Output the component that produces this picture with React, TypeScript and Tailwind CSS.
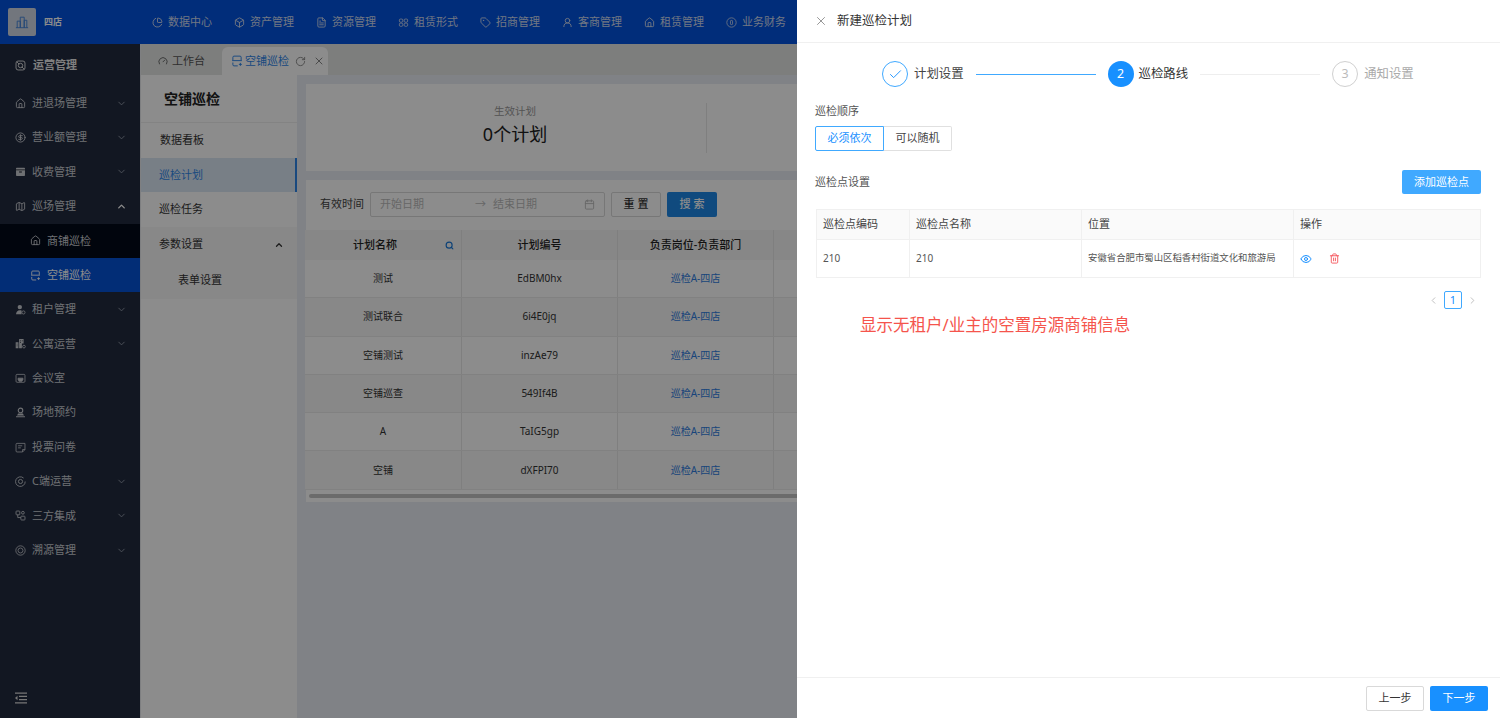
import {
  Box,
  Calendar,
  Check,
  ChevronDown,
  ChevronLeft,
  ChevronRight,
  ChevronUp,
  CircleDollarSign,
  Eye,
  FileText,
  Gauge,
  Home,
  Map,
  PieChart,
  RotateCw,
  Search,
  Tag,
  Trash2,
  UserRound,
  X,
} from "lucide-react";
import type { ComponentType } from "react";

type IconProps = { className?: string };

// icons the packages have no close match for
const BuildingBars = ({ className }: IconProps) => (
  <svg viewBox="0 0 16 16" fill="none" stroke="currentColor" strokeWidth="1" className={className}>
    <path d="M1 14.5h14M2.5 14.5V7h3.5v7.5M6 14.5V2.5h4.5v12M10.5 14.5V6h3v8.5" />
  </svg>
);
const OpsBox = ({ className }: IconProps) => (
  <svg viewBox="0 0 16 16" fill="none" stroke="currentColor" strokeWidth="1.3" className={className}>
    <rect x="1.5" y="1.5" width="13" height="13" rx="3" />
    <circle cx="8" cy="8" r="3.2" />
    <path d="M3 3l3 3M13 13l-3-3" />
  </svg>
);
const SquaresFour = ({ className }: IconProps) => (
  <svg viewBox="0 0 16 16" fill="none" stroke="currentColor" strokeWidth="1.3" className={className}>
    <rect x="2" y="3" width="5" height="4.5" rx="1.5" />
    <rect x="9" y="3" width="5" height="4.5" rx="1.5" />
    <rect x="2" y="9" width="5" height="4.5" rx="1.5" />
    <rect x="9" y="9" width="5" height="4.5" rx="1.5" />
  </svg>
);
const FeeBox = ({ className }: IconProps) => (
  <svg viewBox="0 0 16 16" className={className}>
    <path fill="currentColor" d="M2.5 2.5h11a1 1 0 0 1 1 1v10a1 1 0 0 1-1 1h-11a1 1 0 0 1-1-1v-10a1 1 0 0 1 1-1z" />
    <path fill="#121722" d="M1.5 5h13v1h-13zM6 8h4v1.4H6z" />
  </svg>
);
const EmptyStore = ({ className }: IconProps) => (
  <svg viewBox="0 0 16 16" fill="none" stroke="currentColor" strokeWidth="1.3" className={className}>
    <path d="M2.5 7V3a1.5 1.5 0 0 1 1.5-1.5h8A1.5 1.5 0 0 1 13.5 3v4M1.5 7.5h13" />
    <path d="M2.5 10v3A1.5 1.5 0 0 0 4 14.5h5M10.5 12.5h4M12.5 10.5v4" />
  </svg>
);
const Tenant = ({ className }: IconProps) => (
  <svg viewBox="0 0 16 16" className={className}>
    <circle cx="7" cy="4.5" r="3.2" fill="currentColor" />
    <path fill="currentColor" d="M1.5 15c0-3.6 2.2-6 5.5-6 1 0 1.8.2 2.5.6V15z" />
    <circle cx="12.3" cy="12.3" r="2.3" fill="none" stroke="currentColor" strokeWidth="1.2" />
  </svg>
);
const Apartment = ({ className }: IconProps) => (
  <svg viewBox="0 0 16 16" className={className}>
    <path fill="currentColor" d="M1 6h4v9H1zM6 1.5h6.5V8H10v7H6z" />
    <path fill="#121722" d="M7.5 3.5h1.2v1.2H7.5zM10 3.5h1.2v1.2H10zM7.5 6h1.2v1.2H7.5zM2.5 8.5h1v1h-1zM2.5 11h1v1h-1z" />
    <circle cx="13" cy="12.5" r="2" fill="none" stroke="currentColor" strokeWidth="1.2" />
  </svg>
);
const Meeting = ({ className }: IconProps) => (
  <svg viewBox="0 0 16 16" fill="none" stroke="currentColor" strokeWidth="1.2" className={className}>
    <rect x="1.5" y="2" width="13" height="11.5" rx="1.5" />
    <path fill="currentColor" d="M4.5 7.5h7v2l-1.5 2.5H6L4.5 9.5z" />
  </svg>
);
const Reserve = ({ className }: IconProps) => (
  <svg viewBox="0 0 16 16" className={className}>
    <circle cx="8" cy="5" r="3.3" fill="none" stroke="currentColor" strokeWidth="1.6" />
    <path fill="currentColor" d="M4.5 9.5h7l1.5 3H3zM1.5 13.3h13V15h-13z" />
  </svg>
);
const Vote = ({ className }: IconProps) => (
  <svg viewBox="0 0 16 16" fill="none" stroke="currentColor" strokeWidth="1.2" className={className}>
    <path d="M3 2h11.5v9L11 14.5H3A1.5 1.5 0 0 1 1.5 13V3.5A1.5 1.5 0 0 1 3 2zM11 14.5V11h3.5" />
    <path d="M4.5 5.5h6M4.5 8.5h4" />
  </svg>
);
const ClientOps = ({ className }: IconProps) => (
  <svg viewBox="0 0 16 16" fill="none" stroke="currentColor" strokeWidth="1.3" className={className}>
    <path d="M12.5 3A7 7 0 1 0 14.8 8" />
    <circle cx="8" cy="8" r="3" />
  </svg>
);
const Integrate = ({ className }: IconProps) => (
  <svg viewBox="0 0 16 16" fill="none" stroke="currentColor" strokeWidth="1.3" className={className}>
    <rect x="1.5" y="1.5" width="5.5" height="5.5" rx="1" />
    <circle cx="11.5" cy="4" r="2" />
    <rect x="8.5" y="9" width="6" height="5.5" rx="1" />
    <path d="M4 7v4h4.5" />
  </svg>
);
const Rings = ({ className }: IconProps) => (
  <svg viewBox="0 0 16 16" fill="none" stroke="currentColor" strokeWidth="1.2" className={className}>
    <circle cx="8" cy="8" r="6.8" />
    <circle cx="8" cy="8" r="3.6" />
  </svg>
);
const Collapse = ({ className }: IconProps) => (
  <svg viewBox="0 0 14 14" className={className}>
    <path fill="currentColor" d="M1 1.5h12v1.2H1zM5 4.8h8V6H5zM5 8h8v1.2H5zM1 11.3h12v1.2H1zM3.5 4.8v4.4L1 7z" />
  </svg>
);
const YuanCircle = ({ className }: IconProps) => (
  <svg viewBox="0 0 16 16" fill="none" stroke="currentColor" strokeWidth="1.2" className={className}>
    <circle cx="8" cy="8" r="6.8" />
    <rect x="6.5" y="5" width="3" height="6" rx="1" />
  </svg>
);

const topNav = [
  { name: "数据中心", icon: PieChart },
  { name: "资产管理", icon: Box },
  { name: "资源管理", icon: FileText },
  { name: "租赁形式", icon: SquaresFour },
  { name: "招商管理", icon: Tag },
  { name: "客商管理", icon: UserRound },
  { name: "租赁管理", icon: Home },
  { name: "业务财务", icon: YuanCircle },
];

const menuBefore = [
  { name: "进退场管理", icon: Home, arrow: true },
  { name: "营业额管理", icon: CircleDollarSign, arrow: true },
  { name: "收费管理", icon: FeeBox, arrow: true },
];

const menuAfter = [
  { name: "租户管理", icon: Tenant, arrow: true },
  { name: "公寓运营", icon: Apartment, arrow: true },
  { name: "会议室", icon: Meeting, arrow: false },
  { name: "场地预约", icon: Reserve, arrow: false },
  { name: "投票问卷", icon: Vote, arrow: false },
  { name: "C端运营", icon: ClientOps, arrow: true },
  { name: "三方集成", icon: Integrate, arrow: true },
  { name: "溯源管理", icon: Rings, arrow: true },
];

const plans = [
  { name: "测试", code: "EdBM0hx" },
  { name: "测试联合", code: "6i4E0jq" },
  { name: "空铺测试", code: "inzAe79" },
  { name: "空铺巡查", code: "549If4B" },
  { name: "A", code: "TaIG5gp" },
  { name: "空铺", code: "dXFPI70" },
];

function MenuRow({ name, icon: Icon, arrow }: { name: string; icon: ComponentType<IconProps>; arrow: boolean }) {
  return (
    <div className="h-[34.4px] flex items-center pl-[15px] pr-[13px] gap-[6px]">
      <Icon className="w-[11px] h-[11px]" />
      <span className="flex-1">{name}</span>
      {arrow && <ChevronDown className="w-[11px] h-[11px] text-[#9299a8]" />}
    </div>
  );
}

function Sidebar() {
  return (
    <aside className="w-[141px] shrink-0 bg-[#212a3e] text-[11px] text-[#c9ccd2] border-r border-[#e5e7eb]">
      <div className="h-[42px] flex items-center gap-[7px] pl-[15px] font-bold text-[#e8e8e8]">
        <OpsBox className="w-[11px] h-[11px]" />
        运营管理
      </div>
      {menuBefore.map((m) => (
        <MenuRow key={m.name} {...m} />
      ))}
      <div className="h-[34.4px] flex items-center pl-[15px] pr-[13px] gap-[6px]">
        <Map className="w-[11px] h-[11px]" />
        <span className="flex-1">巡场管理</span>
        <ChevronUp className="w-[11px] h-[11px] text-white" strokeWidth={3} />
      </div>
      <div className="h-[34.4px] flex items-center pl-[30px] gap-[6px] bg-[#030a18]">
        <Home className="w-[11px] h-[11px]" />
        商铺巡检
      </div>
      <div className="h-[34.4px] flex items-center pl-[30px] gap-[6px] bg-[#0552d8] text-white">
        <EmptyStore className="w-[11px] h-[11px]" />
        空铺巡检
      </div>
      {menuAfter.map((m) => (
        <MenuRow key={m.name} {...m} />
      ))}
    </aside>
  );
}

function PlanTable() {
  return (
    <div className="mt-[13px] -ml-px text-[10px] text-[#333]">
      <div className="flex h-[30px] items-center bg-[#f6f6f6] text-[11px] font-medium text-[#222]">
        <div className="w-[157px] h-full flex items-center justify-center pr-[16px] relative border-r border-[#e8e8e8]">
          计划名称
          <Search className="absolute right-[7px] w-[9px] h-[9px] text-[#1677d9]" strokeWidth={3} />
        </div>
        <div className="w-[156px] h-full flex items-center justify-center border-r border-[#e8e8e8]">计划编号</div>
        <div className="w-[156px] h-full flex items-center justify-center border-r border-[#e8e8e8]">负责岗位-负责部门</div>
      </div>
      {plans.map((p, i) => (
        <div
          key={p.code}
          className={`flex h-[38.3px] items-center border-b border-[#ececec] ${i % 2 === 1 ? "bg-[#f7f7f7]" : "bg-white"}`}
        >
          <div className="w-[157px] h-full flex items-center justify-center border-r border-[#e8e8e8]">{p.name}</div>
          <div className="w-[156px] h-full flex items-center justify-center border-r border-[#e8e8e8]">{p.code}</div>
          <div className="w-[156px] h-full flex items-center justify-center border-r border-[#e8e8e8] text-[#2f7de0]">巡检A-四店</div>
        </div>
      ))}
      <div className="mt-[4px] mx-[4px] h-[4px] rounded-full bg-[#c4c4c4]" />
    </div>
  );
}

function Page() {
  return (
    <div className="h-full flex flex-col">
      <header className="h-[44px] shrink-0 flex items-center bg-[#0252de] text-[#cfd9ef] text-[11px]">
        <div className="w-[152px] shrink-0 flex items-center pl-[8px] gap-[8px]">
          <div className="w-[28px] h-[28px] rounded-[2px] bg-[#cfd7e4] flex items-center justify-center">
            <BuildingBars className="w-[14px] h-[14px] text-[#3c7fd8]" />
          </div>
          <span className="text-[9px] font-bold text-white">四店</span>
        </div>
        <nav className="flex gap-[23px]">
          {topNav.map(({ name, icon: Icon }) => (
            <div key={name} className="flex items-center gap-[5px] w-[59px] whitespace-nowrap">
              <Icon className="w-[11px] h-[11px] shrink-0" />
              {name}
            </div>
          ))}
        </nav>
      </header>
      <div className="flex-1 flex min-h-0">
        <Sidebar />
        <div className="flex-1 flex flex-col min-w-0 bg-[#ffffff]">
          <div className="h-[31px] shrink-0 flex items-end bg-[#e3e6e4] text-[11px]">
            <div className="h-[28px] w-[81px] pl-[17px] flex items-center gap-[4px] text-[#555]">
              <Gauge className="w-[10px] h-[10px]" />
              工作台
            </div>
            <div className="h-[28px] w-[106px] pl-[9px] flex items-center gap-[2px] rounded-t-[6px] bg-white text-[#2f86e8] whitespace-nowrap">
              <EmptyStore className="w-[12px] h-[12px]" />
              空铺巡检
              <RotateCw className="w-[11px] h-[11px] ml-[4px] text-[#888]" />
              <X className="w-[12px] h-[12px] ml-[5px] text-[#888]" />
            </div>
          </div>
          <div className="flex-1 flex min-h-0">
            <div className="w-[156px] shrink-0 text-[11px] text-[#333]">
              <div className="h-[48px] flex items-center pl-[23px] text-[14px] font-bold text-[#222] border-b border-[#eeeeee]">
                空铺巡检
              </div>
              <div className="h-[34.5px] flex items-center pl-[19px]">数据看板</div>
              <div className="h-[34.5px] flex items-center pl-[18px] bg-[#dbe8f5] text-[#2f86e8] border-r-2 border-[#2f86e8]">
                巡检计划
              </div>
              <div className="h-[34.5px] flex items-center pl-[18px]">巡检任务</div>
              <div className="h-[36px] flex items-center justify-between pl-[18px] pr-[13px] bg-[#f7f7f7]">
                参数设置
                <ChevronUp className="w-[10px] h-[10px]" strokeWidth={3} />
              </div>
              <div className="h-[36px] flex items-center pl-[37px] bg-[#f7f7f7]">表单设置</div>
            </div>
            <main className="flex-1 min-w-0 bg-[#e9edf4] pt-[9px] pl-[9px]">
              <div className="h-[87px] bg-[#ffffff] flex items-center pl-[18px]">
                <div className="w-[383px] h-[50px] flex flex-col items-center border-r border-[#e8e8e8]">
                  <span className="text-[10.5px] text-[#999] mt-[1px]">生效计划</span>
                  <span className="text-[18px] leading-[26px] mt-[2px] text-[#222]">0个计划</span>
                </div>
              </div>
              <div className="mt-[9px] h-[322px] bg-white pt-[12px]">
                <div className="flex items-center h-[25px] pl-[14px] text-[11px] text-[#444]">
                  有效时间
                  <div className="ml-[6px] w-[235px] h-full flex items-center border border-[#d9d9d9] rounded-[2px] pl-[9px] pr-[9px] text-[#bbb]">
                    <span className="w-[95px]">开始日期</span>
                    <span className="w-[18px]">→</span>
                    <span className="flex-1">结束日期</span>
                    <Calendar className="w-[11px] h-[11px]" />
                  </div>
                  <div className="ml-[6px] w-[50px] h-full flex items-center justify-center border border-[#d9d9d9] rounded-[2px] text-[#333] font-medium">
                    重 置
                  </div>
                  <div className="ml-[6px] w-[50px] h-full flex items-center justify-center rounded-[2px] bg-[#1e88e5] text-white font-medium">
                    搜 索
                  </div>
                </div>
                <PlanTable />
              </div>
            </main>
          </div>
        </div>
      </div>
    </div>
  );
}

function Steps() {
  return (
    <div className="h-[32px] mt-[15px] flex items-center pl-[85px] text-[12.4px] whitespace-nowrap">
      <div className="w-[26px] h-[26px] rounded-full border border-[#40a9ff] flex items-center justify-center">
        <Check className="w-[15px] h-[15px] text-[#1890ff]" strokeWidth={1.5} />
      </div>
      <span className="ml-[6px] text-[#444]">计划设置</span>
      <div className="ml-[12px] w-[120px] h-px bg-[#40a9ff]" />
      <div className="ml-[12px] w-[26px] h-[26px] rounded-full bg-[#1890ff] text-white flex items-center justify-center">2</div>
      <span className="ml-[5px] text-[#333]">巡检路线</span>
      <div className="ml-[12px] w-[120px] h-px bg-[#eeeeee]" />
      <div className="ml-[12px] w-[26px] h-[26px] rounded-full border border-[#d0d0d0] text-[#bbb] flex items-center justify-center">3</div>
      <span className="ml-[6px] text-[#aaa]">通知设置</span>
    </div>
  );
}

function Drawer() {
  return (
    <div className="absolute top-0 right-0 bottom-0 w-[703px] bg-white flex flex-col text-[11px] text-[#555]">
      <div className="h-[43px] shrink-0 flex items-center pl-[17px] gap-[9px] border-b border-[#f0f0f0] text-[12.5px] text-[#333]">
        <X className="w-[14px] h-[14px] text-[#888]" strokeWidth={1.5} />
        新建巡检计划
      </div>
      <div className="flex-1 min-h-0">
        <Steps />
        <div className="pl-[18px] pr-[19px]">
          <div className="mt-[13px] leading-[16px]">巡检顺序</div>
          <div className="mt-[7px] flex h-[25px]">
            <div className="w-[69px] flex items-center justify-center border border-[#40a9ff] rounded-l-[2px] text-[#1890ff]">必须依次</div>
            <div className="w-[68px] flex items-center justify-center border border-l-0 border-[#e0e0e0] rounded-r-[2px] text-[#444]">可以随机</div>
          </div>
          <div className="mt-[19px] flex items-center justify-between h-[24px]">
            巡检点设置
            <div className="w-[79px] h-full flex items-center justify-center rounded-[2px] bg-[#40a9ff] text-white">添加巡检点</div>
          </div>
          <div className="mt-[15px] ml-px border border-[#f0f0f0] text-[10px]">
            <div className="flex h-[30px] items-center bg-[#fafafa] text-[11px] text-[#444] border-b border-[#f0f0f0]">
              <div className="w-[93px] h-full flex items-center pl-[6px] border-r border-[#f0f0f0]">巡检点编码</div>
              <div className="w-[172px] h-full flex items-center pl-[6px] border-r border-[#f0f0f0]">巡检点名称</div>
              <div className="w-[212px] h-full flex items-center pl-[6px] border-r border-[#f0f0f0]">位置</div>
              <div className="flex-1 pl-[6px]">操作</div>
            </div>
            <div className="flex h-[37px] items-center">
              <div className="w-[93px] h-full flex items-center pl-[6px] border-r border-[#f0f0f0]">210</div>
              <div className="w-[172px] h-full flex items-center pl-[6px] border-r border-[#f0f0f0]">210</div>
              <div className="w-[212px] h-full flex items-center pl-[6px] border-r border-[#f0f0f0] text-[9.4px] whitespace-nowrap">
                安徽省合肥市蜀山区稻香村街道文化和旅游局
              </div>
              <div className="flex-1 flex items-center pl-[6px] gap-[17px]">
                <Eye className="w-[12px] h-[12px] text-[#1890ff]" />
                <Trash2 className="w-[11px] h-[11px] text-[#f5555c]" />
              </div>
            </div>
          </div>
          <div className="mt-[13px] h-[18px] flex items-center justify-end gap-[5px] pr-[3px] text-[#bbb]">
            <ChevronLeft className="w-[11px] h-[11px]" />
            <div className="w-[18px] h-[18px] flex items-center justify-center border border-[#40a9ff] rounded-[2px] text-[#1890ff]">1</div>
            <ChevronRight className="w-[11px] h-[11px]" />
          </div>
          <div className="ml-[45px] mt-[4px] text-[16.5px] leading-[24px] text-[#f5544c]">显示无租户/业主的空置房源商铺信息</div>
        </div>
      </div>
      <div className="h-[41px] shrink-0 border-t border-[#f0f0f0] flex items-center justify-end gap-[6px] pr-[12px]">
        <div className="w-[58px] h-[25px] flex items-center justify-center border border-[#d9d9d9] rounded-[2px] text-[#333]">上一步</div>
        <div className="w-[58px] h-[25px] flex items-center justify-center rounded-[2px] bg-[#1890ff] text-white">下一步</div>
      </div>
    </div>
  );
}

export default function App() {
  return (
    <div className="relative w-[1500px] h-[718px] overflow-hidden font-['Noto_Sans','Noto_Sans_CJK_SC',sans-serif]">
      <Page />
      <div className="absolute inset-0 bg-black/45" />
      <Collapse className="absolute left-[14px] bottom-[13px] w-[14px] h-[14px] text-[#777]" />
      <Drawer />
    </div>
  );
}
